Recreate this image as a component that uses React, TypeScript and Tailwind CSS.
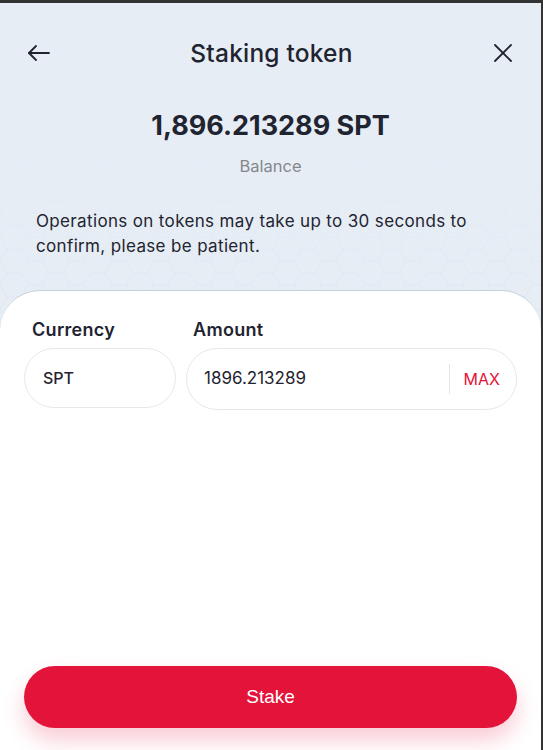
import React from "react";

const font = { fontFamily: "Inter, 'Noto Sans', sans-serif" };

function HexBg() {
  return (
    <svg className="absolute left-0 top-[150px] w-full h-[160px] pointer-events-none" viewBox="0 0 541 160" preserveAspectRatio="none">
      <defs>
        <pattern id="hex" width="42" height="24" patternUnits="userSpaceOnUse">
          <path d="M0 12 L7 0 L21 0 L28 12 L21 24 L7 24 Z M28 12 L42 12" fill="none" stroke="#d9e2ec" strokeWidth="0.8" />
        </pattern>
        <linearGradient id="fade" x1="0" y1="0" x2="0" y2="1">
          <stop offset="0" stopColor="#fff" stopOpacity="0" />
          <stop offset="0.5" stopColor="#fff" stopOpacity="0.5" />
          <stop offset="1" stopColor="#fff" stopOpacity="0.9" />
        </linearGradient>
        <mask id="m">
          <rect width="541" height="160" fill="url(#fade)" />
        </mask>
      </defs>
      <rect width="541" height="160" fill="url(#hex)" mask="url(#m)" opacity="0.8" />
    </svg>
  );
}

export default function App() {
  return (
    <div className="w-[543px] h-[750px] bg-[#333] pt-[3px] pr-[2px] overflow-hidden" style={font}>
      <div className="relative w-full h-full bg-[#e6edf5] flex flex-col">
        <HexBg />
        <div className="relative flex items-center justify-between px-[27px] pt-[33px] h-[67px]">
          <svg width="24" height="24" viewBox="0 0 24 24" fill="none" stroke="#1f2430" strokeWidth="1.8" strokeLinecap="round" strokeLinejoin="round">
            <path d="M22 12H2" />
            <path d="M9 5L2 12L9 19" />
          </svg>
          <div className="text-[24.5px] font-medium text-[#1f2430] tracking-[0.2px]">Staking token</div>
          <svg width="22" height="22" viewBox="0 0 22 22" fill="none" stroke="#1f2430" strokeWidth="1.8" strokeLinecap="round">
            <path d="M3 3L19 19" />
            <path d="M19 3L3 19" />
          </svg>
        </div>
        <div className="relative mt-[36px] text-center text-[27px] font-bold text-[#1f2430] leading-[40px]">1,896.213289 SPT</div>
        <div className="relative mt-[8px] text-center text-[16.5px] text-[#85878c] leading-[24px]">Balance</div>
        <p className="relative mt-[31px] px-[36px] text-[17px] tracking-[0.35px] leading-[25px] text-[#1f2430]">
          Operations on tokens may take up to 30 seconds to confirm, please be patient.
        </p>
        <div className="relative mt-[31px] flex-1 bg-white rounded-t-[40px] border-t border-[#c5d0dd] px-[24px] pt-[27px] flex flex-col">
          <div className="flex gap-[10px]">
            <div className="w-[152px] flex flex-col">
              <div className="pl-[8px] text-[18px] tracking-[0.3px] font-semibold text-[#1f2430] leading-[24px]">Currency</div>
              <div className="mt-[6px] h-[60px] rounded-full border border-[#e6e8ee] flex items-center px-[18px] text-[16px] font-medium text-[#1f2430]">
                SPT
              </div>
            </div>
            <div className="w-[331px] flex flex-col">
              <div className="pl-[7px] text-[18px] tracking-[0.3px] font-semibold text-[#1f2430] leading-[24px]">Amount</div>
              <div className="mt-[6px] h-[62px] rounded-full border border-[#e6e8ee] flex items-center pl-[17px] pr-[16px] text-[17px] text-[#1f2430]">
                <span className="flex-1">1896.213289</span>
                <span className="w-px h-[30px] bg-[#e3e5ea] mr-[14px]" />
                <span className="text-[#e3133a] text-[16px]">MAX</span>
              </div>
            </div>
          </div>
          <div className="flex-1" />
          <button
            className="mb-[22px] h-[62px] w-full rounded-full bg-[#e3133a] text-white text-[19px] shadow-[0_12px_22px_rgba(227,19,58,0.22)]"
            style={{ fontFamily: "'Liberation Sans', Arial, sans-serif" }}
          >
            Stake
          </button>
        </div>
      </div>
    </div>
  );
}
